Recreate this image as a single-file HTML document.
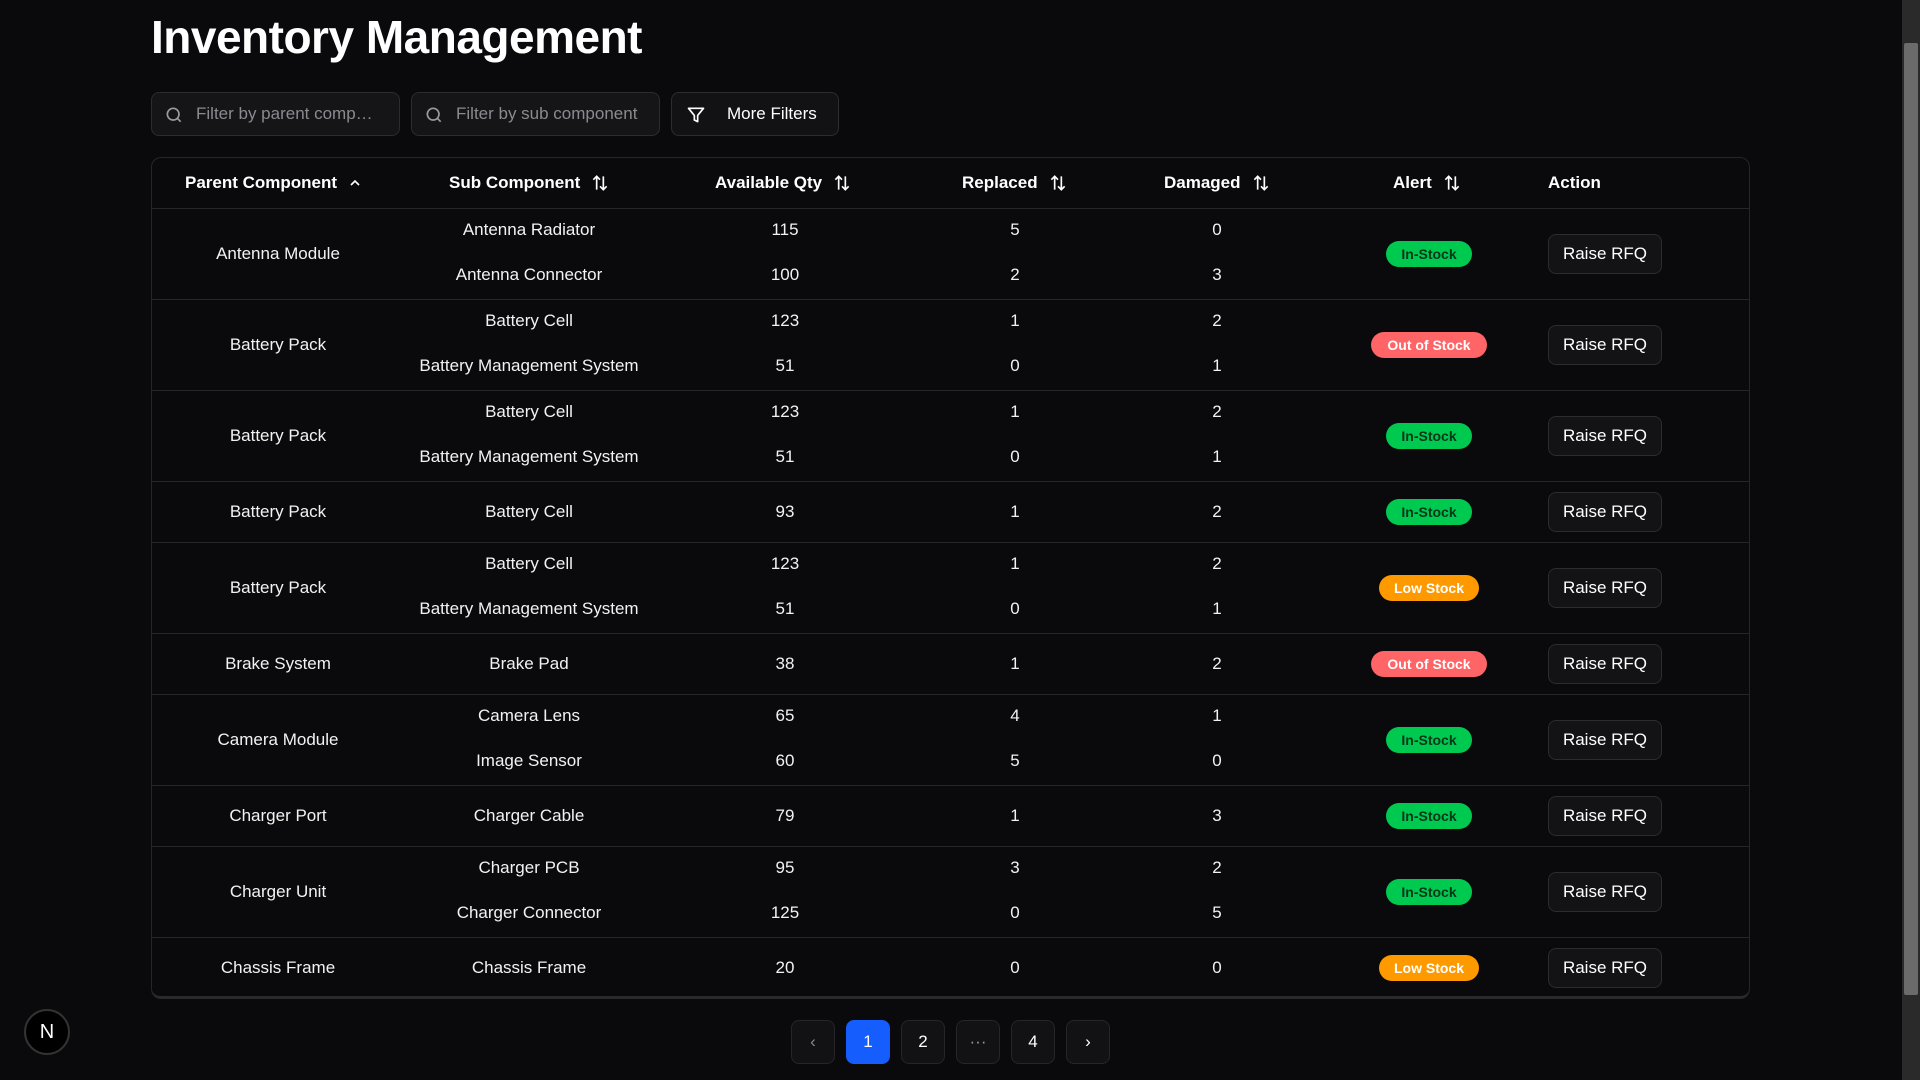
<!DOCTYPE html>
<html><head><meta charset="utf-8"><style>
*{box-sizing:border-box;margin:0;padding:0}
body{width:1920px;height:1080px;background:#0a0a0c;color:#f2f2f2;font-family:"Liberation Sans",sans-serif;position:relative;overflow:hidden}
h1{position:absolute;left:151px;top:10px;font-size:46px;font-weight:bold;letter-spacing:-0.5px;color:#fff}
.inp{position:absolute;top:92px;height:44px;border:1px solid #2c2c30;border-radius:8px;background:#151518;color:#8a8a90;font-size:17px;display:flex;align-items:center;padding-left:44px}
.inp svg{position:absolute;left:12px;top:12px}
.tbl{position:absolute;left:151px;top:157px;width:1599px;height:842px;border:1px solid #26262a;border-radius:10px;border-bottom:3px solid #2a2a2e}
.hd{position:absolute;top:0;height:50px;display:flex;align-items:center;font-weight:bold;font-size:17px;gap:10px;color:#fff}
.row{position:absolute;left:0;width:1597px;border-top:1px solid #26262a}
.c{position:absolute;width:300px;text-align:center;font-size:17px;line-height:20px}
.badge{position:absolute;height:26px;border-radius:13px;font-size:14px;font-weight:bold;display:flex;align-items:center;justify-content:center}
.in{background:#00c950;color:#03371a;width:86px}
.out{background:#ff6467;color:#fff;width:116px}
.low{background:#fe9a00;color:#fff;width:100px}
.btn{position:absolute;left:1396px;width:114px;height:40px;border:1px solid #2c2c30;border-radius:8px;background:#131316;font-size:17px;display:flex;align-items:center;justify-content:center;color:#fff}
.pg{position:absolute;top:1020px;width:44px;height:44px;border:1px solid #26262a;border-radius:8px;background:#121215;display:flex;align-items:center;justify-content:center;font-size:17px;color:#fff}
</style></head><body>
<h1>Inventory Management</h1>
<div class="inp" style="left:151px;width:249px"><svg width="20" height="20" viewBox="0 0 24 24" fill="none" stroke="#9a9aa0" stroke-width="2"><circle cx="11" cy="11" r="7"/><path d="M20 20l-4-4"/></svg>Filter by parent comp…</div>
<div class="inp" style="left:411px;width:249px"><svg width="20" height="20" viewBox="0 0 24 24" fill="none" stroke="#9a9aa0" stroke-width="2"><circle cx="11" cy="11" r="7"/><path d="M20 20l-4-4"/></svg>Filter by sub component</div>
<div class="inp" style="left:671px;width:168px;color:#fff;padding-left:55px;background:#121215"><svg style="left:14px" width="20" height="20" viewBox="0 0 24 24" fill="none" stroke="#fff" stroke-width="2" stroke-linejoin="round"><path d="M3 4h18l-7 8.5V20l-4-2v-5.5z"/></svg>More Filters</div>
<div class="tbl">
<div class="hd" style="left:33px">Parent Component <svg width="16" height="16" viewBox="0 0 24 24" fill="none" stroke="#fff" stroke-width="2.5"><path d="M6 15l6-6 6 6"/></svg></div>
<div class="hd" style="left:297px">Sub Component <svg width="20" height="20" viewBox="0 0 24 24" fill="none" stroke="#fff" stroke-width="2"><path d="M8 20V4M4 8l4-4 4 4M16 4v16M12 16l4 4 4-4"/></svg></div>
<div class="hd" style="left:563px">Available Qty <svg width="20" height="20" viewBox="0 0 24 24" fill="none" stroke="#fff" stroke-width="2"><path d="M8 20V4M4 8l4-4 4 4M16 4v16M12 16l4 4 4-4"/></svg></div>
<div class="hd" style="left:810px">Replaced <svg width="20" height="20" viewBox="0 0 24 24" fill="none" stroke="#fff" stroke-width="2"><path d="M8 20V4M4 8l4-4 4 4M16 4v16M12 16l4 4 4-4"/></svg></div>
<div class="hd" style="left:1012px">Damaged <svg width="20" height="20" viewBox="0 0 24 24" fill="none" stroke="#fff" stroke-width="2"><path d="M8 20V4M4 8l4-4 4 4M16 4v16M12 16l4 4 4-4"/></svg></div>
<div class="hd" style="left:1241px">Alert <svg width="20" height="20" viewBox="0 0 24 24" fill="none" stroke="#fff" stroke-width="2"><path d="M8 20V4M4 8l4-4 4 4M16 4v16M12 16l4 4 4-4"/></svg></div>
<div class="hd" style="left:1396px">Action</div>
<div id="rows"></div>
</div>
<div class="pg" style="left:791px;color:#888">&#8249;</div>
<div class="pg" style="left:846px;background:#155dfc;border-color:#155dfc">1</div>
<div class="pg" style="left:901px">2</div>
<div class="pg" style="left:956px;color:#999">&middot;&middot;&middot;</div>
<div class="pg" style="left:1011px">4</div>
<div class="pg" style="left:1066px">&#8250;</div>
<div style="position:absolute;left:24px;top:1009px;width:46px;height:46px;border-radius:50%;background:#000;border:2px solid #333;color:#fff;font-size:20px;display:flex;align-items:center;justify-content:center">N</div>
<div style="position:absolute;left:1902px;top:0;width:18px;height:1080px;background:#2a2a2a"></div>
<div style="position:absolute;left:1904px;top:43px;width:14px;height:952px;background:#6b6b6b;border-radius:2px"></div>
<script>
var D=[
["Antenna Module",[["Antenna Radiator",115,5,0],["Antenna Connector",100,2,3]],"in"],
["Battery Pack",[["Battery Cell",123,1,2],["Battery Management System",51,0,1]],"out"],
["Battery Pack",[["Battery Cell",123,1,2],["Battery Management System",51,0,1]],"in"],
["Battery Pack",[["Battery Cell",93,1,2]],"in"],
["Battery Pack",[["Battery Cell",123,1,2],["Battery Management System",51,0,1]],"low"],
["Brake System",[["Brake Pad",38,1,2]],"out"],
["Camera Module",[["Camera Lens",65,4,1],["Image Sensor",60,5,0]],"in"],
["Charger Port",[["Charger Cable",79,1,3]],"in"],
["Charger Unit",[["Charger PCB",95,3,2],["Charger Connector",125,0,5]],"in"],
["Chassis Frame",[["Chassis Frame",20,0,0]],"low"]];
var L={in:"In-Stock",out:"Out of Stock",low:"Low Stock"};
var cx=[126,377,633,863,1065,1277],y=50,h="";
D.forEach(function(r){var H=r[1].length==2?91:61;
h+='<div class="row" style="top:'+y+'px;height:'+H+'px">';
var m=H/2-11;
h+='<div class="c" style="left:'+(cx[0]-150)+'px;top:'+m+'px">'+r[0]+'</div>';
r[1].forEach(function(s,i){var t=r[1].length==2?(i?56:11):m;
for(var k=0;k<4;k++)h+='<div class="c" style="left:'+(cx[k+1]-150)+'px;top:'+t+'px">'+s[k]+'</div>';});
var w={in:86,out:116,low:100}[r[2]];
h+='<div class="badge '+r[2]+'" style="left:'+(cx[5]-w/2)+'px;top:'+(H/2-14)+'px">'+L[r[2]]+'</div>';
h+='<div class="btn" style="top:'+(H/2-21)+'px">Raise RFQ</div></div>';
y+=H;});
document.getElementById("rows").innerHTML=h;
</script>
</body></html>
